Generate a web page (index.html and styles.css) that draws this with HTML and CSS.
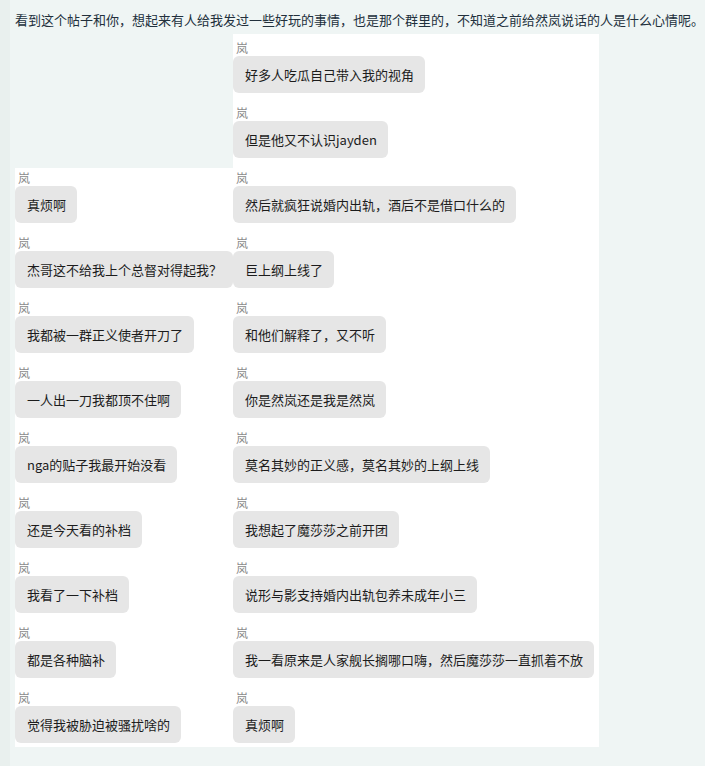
FILE: index.html
```html
<!DOCTYPE html>
<html lang="zh-CN">
<head>
    <meta charset="UTF-8">
    <meta name="viewport" content="width=device-width, initial-scale=1.0">
    <title>岚</title>
    <link rel="stylesheet" href="styles.css">
</head>
<body>
    <div class="page">
        <p class="intro">看到这个帖子和你，想起来有人给我发过一些好玩的事情，也是那个群里的，不知道之前给然岚说话的人是什么心情呢。</p>

        <div class="shots">
            <div class="chat chat-left">
                <div class="msg"><span class="name">岚</span><span class="bubble">真烦啊</span></div>
                <div class="msg"><span class="name">岚</span><span class="bubble">杰哥这不给我上个总督对得起我？</span></div>
                <div class="msg"><span class="name">岚</span><span class="bubble">我都被一群正义使者开刀了</span></div>
                <div class="msg"><span class="name">岚</span><span class="bubble">一人出一刀我都顶不住啊</span></div>
                <div class="msg"><span class="name">岚</span><span class="bubble">nga的贴子我最开始没看</span></div>
                <div class="msg"><span class="name">岚</span><span class="bubble">还是今天看的补档</span></div>
                <div class="msg"><span class="name">岚</span><span class="bubble">我看了一下补档</span></div>
                <div class="msg"><span class="name">岚</span><span class="bubble">都是各种脑补</span></div>
                <div class="msg"><span class="name">岚</span><span class="bubble">觉得我被胁迫被骚扰啥的</span></div>
            </div>

            <div class="chat chat-right">
                <div class="msg"><span class="name">岚</span><span class="bubble">好多人吃瓜自己带入我的视角</span></div>
                <div class="msg"><span class="name">岚</span><span class="bubble">但是他又不认识jayden</span></div>
                <div class="msg"><span class="name">岚</span><span class="bubble">然后就疯狂说婚内出轨，酒后不是借口什么的</span></div>
                <div class="msg"><span class="name">岚</span><span class="bubble">巨上纲上线了</span></div>
                <div class="msg"><span class="name">岚</span><span class="bubble">和他们解释了，又不听</span></div>
                <div class="msg"><span class="name">岚</span><span class="bubble">你是然岚还是我是然岚</span></div>
                <div class="msg"><span class="name">岚</span><span class="bubble">莫名其妙的正义感，莫名其妙的上纲上线</span></div>
                <div class="msg"><span class="name">岚</span><span class="bubble">我想起了魔莎莎之前开团</span></div>
                <div class="msg"><span class="name">岚</span><span class="bubble">说形与影支持婚内出轨包养未成年小三</span></div>
                <div class="msg"><span class="name">岚</span><span class="bubble">我一看原来是人家舰长搁哪口嗨，然后魔莎莎一直抓着不放</span></div>
                <div class="msg"><span class="name">岚</span><span class="bubble">真烦啊</span></div>
            </div>
        </div>
    </div>
</body>
</html>
```

FILE: styles.css
```css
body {
    margin: 0;
    background: #e9f0ee;
    font-family: "Microsoft YaHei", "Noto Sans CJK SC", "Noto Sans", sans-serif;
}

.page {
    margin-left: 10px;
    min-height: 766px;
    background: #eff5f4;
    padding-left: 5px;
    padding-top: 10px;
    box-sizing: border-box;
}

.intro {
    margin: 0;
    font-size: 13px;
    line-height: 20px;
    color: #22303c;
    white-space: nowrap;
}

.shots {
    display: flex;
    align-items: flex-start;
    margin-top: 4px;
}

.chat {
    background: #ffffff;
    display: flex;
    flex-direction: column;
}

.chat-left {
    width: 218px;
    margin-top: 134px;
}

.chat-right {
    width: 366px;
}

.msg {
    display: flex;
    flex-direction: column;
    align-items: flex-start;
    padding: 6px 0;
}

.chat-left .msg:first-child {
    padding-top: 2px;
}

.msg:last-child {
    padding-bottom: 4px;
}

.name {
    font-size: 12px;
    line-height: 16px;
    color: #8a8a8a;
    padding-left: 3px;
}

.bubble {
    display: inline-block;
    background: #e6e6e6;
    border-radius: 6px;
    font-size: 13px;
    line-height: 37px;
    padding: 0 11px 0 12px;
    color: #1c1c1c;
    white-space: nowrap;
}
```
